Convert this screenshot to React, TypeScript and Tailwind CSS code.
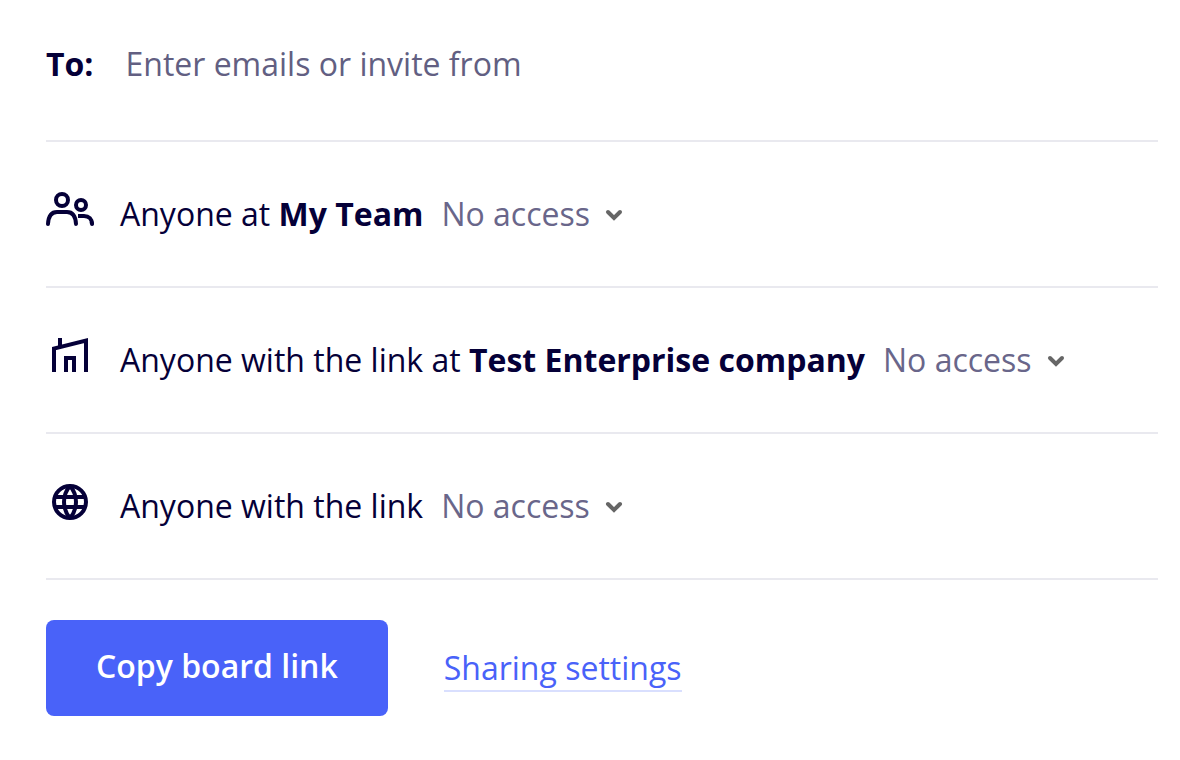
import React from "react";

const accessLevels = ["No access", "Can view", "Can comment", "Can edit"];

const TeamIcon = () => (
	<svg
		viewBox="0 0 48 48"
		fill="none"
		stroke="currentColor"
		strokeWidth="4"
		className="size-12 shrink-0"
		aria-hidden="true"
	>
		<circle cx="16" cy="10" r="6" />
		<circle cx="35" cy="15" r="5" />
		<path
			d="M2 34c.4-7 3-12 9-12h10c6 0 8.6 5 9 12"
			strokeLinecap="round"
		/>
		<path d="M32 26h6c5 0 8 3 8 8" />
		<path d="M45.8 32.5l.2 1.5" strokeLinecap="round" />
	</svg>
);

const CompanyIcon = () => (
	<svg
		viewBox="0 0 48 48"
		fill="none"
		stroke="currentColor"
		strokeWidth="4"
		className="size-12 shrink-0"
		aria-hidden="true"
	>
		<path d="M8 36V12.6L40 4.5V36" />
		<path d="M14 2v9" />
		<path d="M20 36V22h8v14" />
	</svg>
);

const GlobeIcon = () => (
	<svg
		viewBox="0 0 48 48"
		fill="none"
		stroke="currentColor"
		strokeWidth="4"
		className="size-12 shrink-0"
		aria-hidden="true"
	>
		<circle cx="24" cy="20" r="16" />
		<path d="M24 4c-8 9-8 23 0 32M24 4c8 9 8 23 0 32" />
		<path d="M9 15h30M9 25h30" />
	</svg>
);

interface AccessRowProps {
	id: string;
	icon: React.ReactNode;
	label: string;
	name?: string;
}

const AccessRow = ({ id, icon, label, name }: AccessRowProps) => {
	return (
		<div className="flex items-center gap-[26px] border-b-2 border-[#e9e9ef] py-12">
			{icon}
			<div className="flex items-center gap-[18px]">
				<label htmlFor={id} className="whitespace-nowrap">
					{label} {name && <strong className="font-bold">{name}</strong>}
				</label>
				<div className="relative flex items-center">
					<select
						id={id}
						className="field-sizing-content h-12 cursor-pointer appearance-none bg-transparent pr-[34px] text-[#69668a]"
					>
						{accessLevels.map((level) => (
							<option key={level}>{level}</option>
						))}
					</select>
					<svg
						viewBox="0 0 20 20"
						fill="none"
						stroke="#666666"
						strokeWidth="4"
						strokeLinecap="round"
						className="pointer-events-none absolute right-0 size-5"
						aria-hidden="true"
					>
						<path d="M4 8l6 6 6-6" />
					</svg>
				</div>
			</div>
		</div>
	);
};

const App = () => {
	return (
		<main className="bg-white pr-[22px] pl-[46px] font-['Open_Sans',sans-serif] text-[32px] leading-[48px] text-[#050038]">
			<div className="flex items-center gap-8 border-b-2 border-[#e9e9ef] pt-10 pb-[52px]">
				<label htmlFor="emails" className="font-bold">
					To:
				</label>
				<input
					id="emails"
					type="text"
					placeholder="Enter emails or invite from"
					className="h-12 min-w-0 flex-1 bg-transparent outline-none placeholder:text-[#625f82]"
				/>
			</div>

			<AccessRow
				id="team-access"
				icon={<TeamIcon />}
				label="Anyone at"
				name="My Team"
			/>
			<AccessRow
				id="company-access"
				icon={<CompanyIcon />}
				label="Anyone with the link at"
				name="Test Enterprise company"
			/>
			<AccessRow
				id="link-access"
				icon={<GlobeIcon />}
				label="Anyone with the link"
			/>

			<div className="flex items-center gap-14 py-10">
				<button
					type="button"
					className="cursor-pointer rounded-lg bg-[#4962f9] px-[50px] pt-[22px] pb-[26px] font-semibold text-white"
				>
					Copy board link
				</button>
				<a
					href="#settings"
					className="flex border-b-2 border-[#d9dffe] pt-0.5 leading-[44px] text-[#4962f9]"
				>
					Sharing settings
				</a>
			</div>
		</main>
	);
};

export default App;
